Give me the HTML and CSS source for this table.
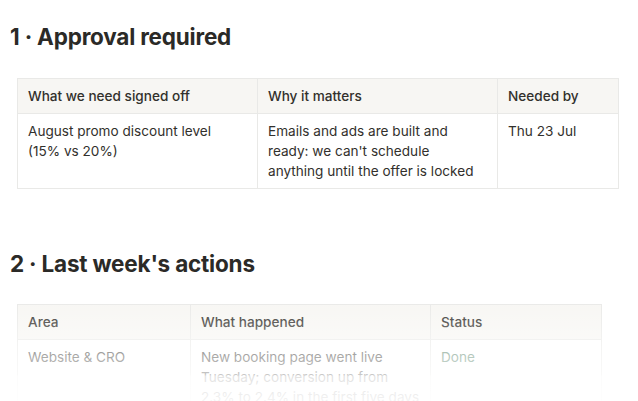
FILE: index.html
```html
<!DOCTYPE html>
<html lang="en">
<head>
<meta charset="utf-8">
<title>Weekly update</title>
<link rel="stylesheet" href="styles.css">
</head>
<body>
<main class="page">
  <h2 class="section-title">1 · Approval required</h2>
  <table class="grid grid-approval">
    <colgroup>
      <col class="c-240"><col class="c-240"><col class="c-120">
    </colgroup>
    <thead>
      <tr><th>What we need signed off</th><th>Why it matters</th><th>Needed by</th></tr>
    </thead>
    <tbody>
      <tr>
        <td>August promo discount level<br>(15% vs 20%)</td>
        <td>Emails and ads are built and ready: we can't schedule anything until the offer is locked</td>
        <td>Thu 23 Jul</td>
      </tr>
    </tbody>
  </table>

  <h2 class="section-title section-second">2 · Last week's actions</h2>
  <table class="grid grid-actions">
    <colgroup>
      <col class="c-173"><col class="c-240"><col class="c-170">
    </colgroup>
    <thead>
      <tr><th>Area</th><th>What happened</th><th>Status</th></tr>
    </thead>
    <tbody>
      <tr>
        <td>Website &amp; CRO</td>
        <td>New booking page went live Tuesday; conversion up from 2.3% to 2.4% in the first five days</td>
        <td class="status-done">Done</td>
      </tr>
    </tbody>
  </table>
  <div class="fade"></div>
</main>
</body>
</html>
```
FILE: styles.css
```css
html, body {
  margin: 0;
  padding: 0;
  background: #ffffff;
}
body {
  font-family: Inter, "Noto Sans", "Liberation Sans", sans-serif;
  color: #32302c;
  width: 638px;
  height: 401px;
  overflow: hidden;
}
.page {
  position: relative;
  height: 401px;
  padding: 21px 0 0 10px;
  box-sizing: border-box;
  overflow: hidden;
}
.section-title {
  margin: 0;
  font-size: 22.5px;
  line-height: 32px;
  font-weight: 700;
  letter-spacing: -0.2px;
  color: #2b2a27;
}
.section-second {
  margin-top: 59px;
}
.grid {
  border-collapse: collapse;
  table-layout: fixed;
  margin-left: 7px;
  font-size: 13.6px;
  line-height: 20px;
}
.grid-approval {
  width: 601px;
  margin-top: 25px;
}
.grid-actions {
  width: 584px;
  margin-top: 24px;
}
.c-240 { width: 240px; }
.c-120 { width: 121px; }
.c-173 { width: 173px; }
.c-170 { width: 171px; }
.grid th,
.grid td {
  border: 1px solid #e9e9e7;
  padding: 7px 10px 7px 10px;
  text-align: left;
  vertical-align: top;
  font-weight: 400;
}
.grid th {
  background: #f7f6f3;
  font-weight: 500;
}
.status-done {
  color: #4f7d62;
}
.fade {
  position: absolute;
  left: 0;
  right: 0;
  top: 298px;
  bottom: 0;
  background: linear-gradient(to bottom,
    rgba(255,255,255,0) 0%,
    rgba(255,255,255,0.22) 22%,
    rgba(255,255,255,0.6) 58%,
    rgba(255,255,255,0.72) 74%,
    rgba(255,255,255,0.86) 76%,
    rgba(255,255,255,0.94) 100%);
  pointer-events: none;
}
```
